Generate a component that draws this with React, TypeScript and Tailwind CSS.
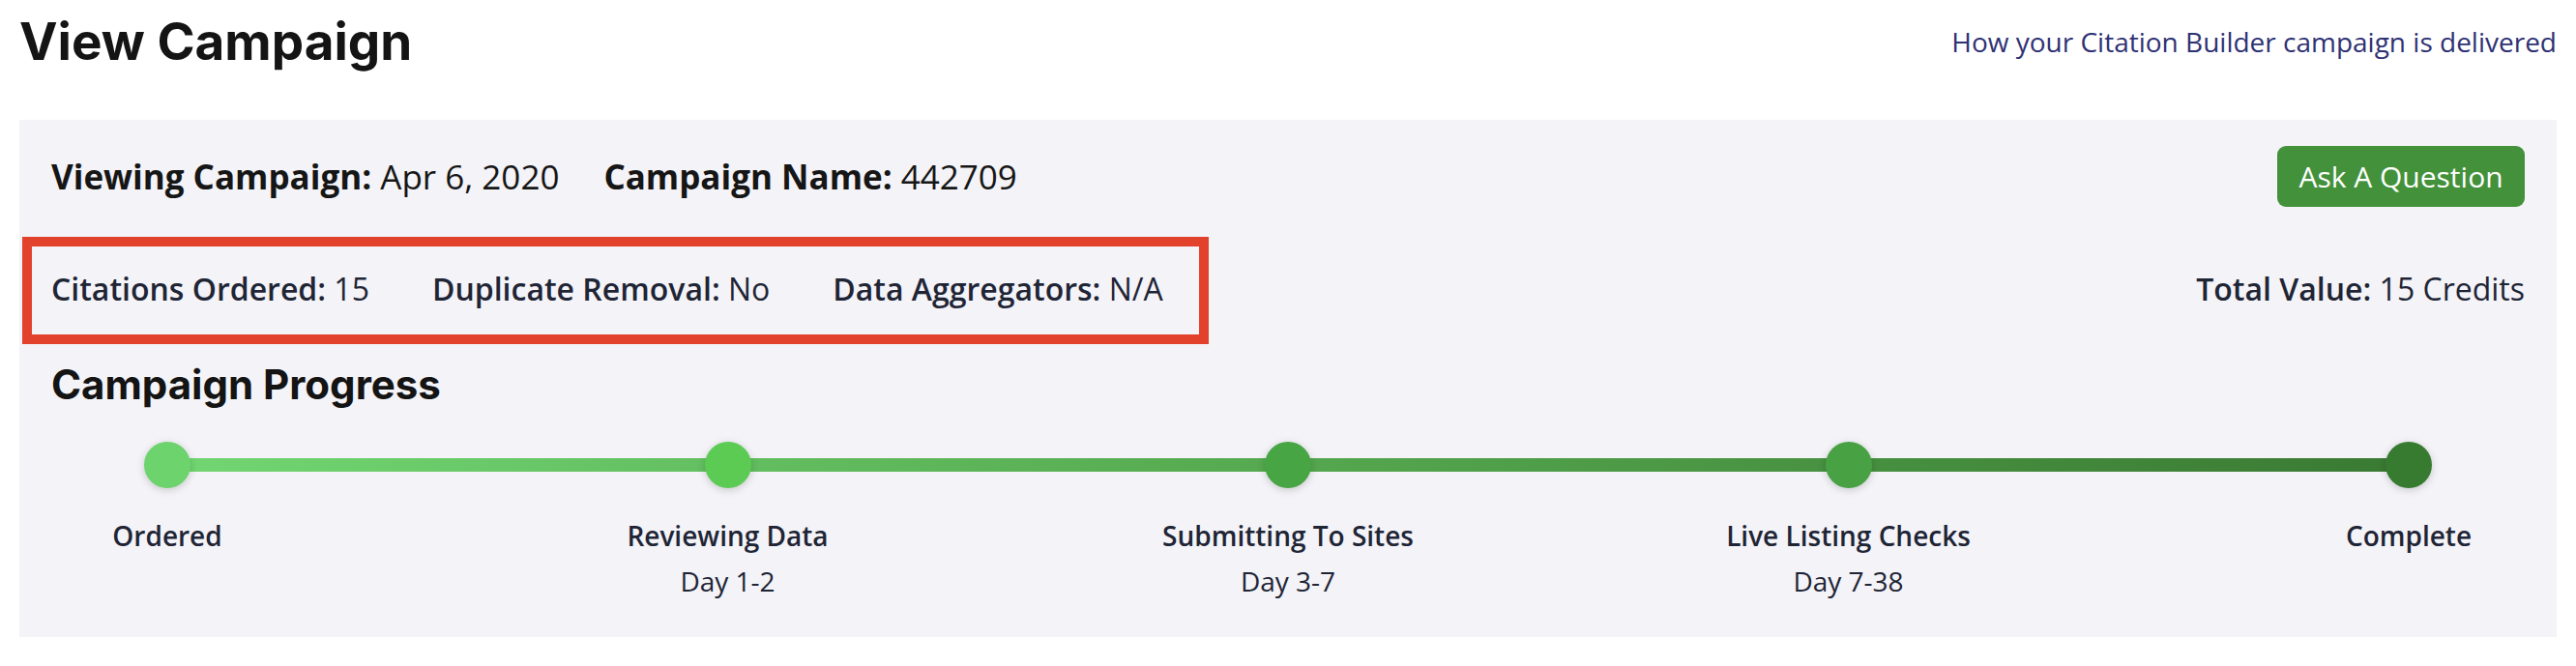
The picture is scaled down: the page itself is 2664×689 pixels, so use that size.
import React from "react";

const steps = [
  { label: "Ordered", day: "", color: "bg-[#6dd36d]" },
  { label: "Reviewing Data", day: "Day 1-2", color: "bg-[#5ccb53]" },
  { label: "Submitting To Sites", day: "Day 3-7", color: "bg-[#48a543]" },
  { label: "Live Listing Checks", day: "Day 7-38", color: "bg-[#48a243]" },
  { label: "Complete", day: "", color: "bg-[#377b31]" },
];

export default function App() {
  return (
    <div className="w-[2664px] h-[689px] bg-white font-['Open_Sans',sans-serif]">
      <div className="flex items-center justify-between pl-[20px] pr-[20px] h-[124px] pb-[38px]">
        <h1 className="font-['Inter',sans-serif] font-bold text-[53px] leading-[60px] tracking-[0px] text-[#141414]">
          View Campaign
        </h1>
        <a className="text-[28px] leading-[40px] text-[#2f3274]">How your Citation Builder campaign is delivered</a>
      </div>

      <div className="mx-[20px] bg-[#f3f3f8] px-[33px] pt-[27px] pb-[38px]">
        <div className="flex items-center justify-between h-[63px]">
          <div className="flex items-center gap-[46px] text-[35px] leading-[46px] text-[#161616]">
            <div>
              <span className="font-bold">Viewing Campaign:</span> Apr 6, 2020
            </div>
            <div>
              <span className="font-bold">Campaign Name:</span> 442709
            </div>
          </div>
          <button className="h-[63px] w-[256px] rounded-[9px] bg-[#43913b] text-white text-[30px] leading-[40px]">
            Ask A Question
          </button>
        </div>

        <div className="flex items-center justify-between mt-[31px]">
          <div className="-ml-[30px] w-[1227px] h-[111px] border-[10px] border-[#e2412b] pl-[20px] pb-[4px] flex items-center gap-[65px] text-[32px] leading-[42px] text-[#1f2535]">
            <div>
              <span className="font-semibold">Citations Ordered:</span> 15
            </div>
            <div>
              <span className="font-semibold">Duplicate Removal:</span> No
            </div>
            <div>
              <span className="font-semibold">Data Aggregators:</span> N/A
            </div>
          </div>
          <div className="text-[32px] leading-[42px] text-[#1f2535] pb-[4px]">
            <span className="font-semibold">Total Value:</span> 15 Credits
          </div>
        </div>

        <h2 className="mt-[17px] font-['Inter',sans-serif] font-bold text-[42px] leading-[50px] tracking-[0px] text-[#141414]">
          Campaign Progress
        </h2>

        <div className="relative mt-[34px] flex justify-between">
          <div className="absolute left-[120px] right-[120px] top-[17px] h-[14px] bg-gradient-to-r from-[#72d672] via-[#55a84f] to-[#3a7a33]" />
          {steps.map((s) => (
            <div key={s.label} className="relative w-[240px] flex flex-col items-center">
              <div className={`w-[48px] h-[48px] rounded-full ${s.color} shadow-[0_2px_8px_rgba(0,0,0,0.18)]`} />
              <div className="mt-[29px] text-[28px] leading-[40px] font-semibold text-[#1f2535] whitespace-nowrap">
                {s.label}
              </div>
              <div className="mt-[7px] text-[28px] leading-[40px] text-[#1f2535] whitespace-nowrap h-[40px]">
                {s.day}
              </div>
            </div>
          ))}
        </div>
      </div>
    </div>
  );
}
